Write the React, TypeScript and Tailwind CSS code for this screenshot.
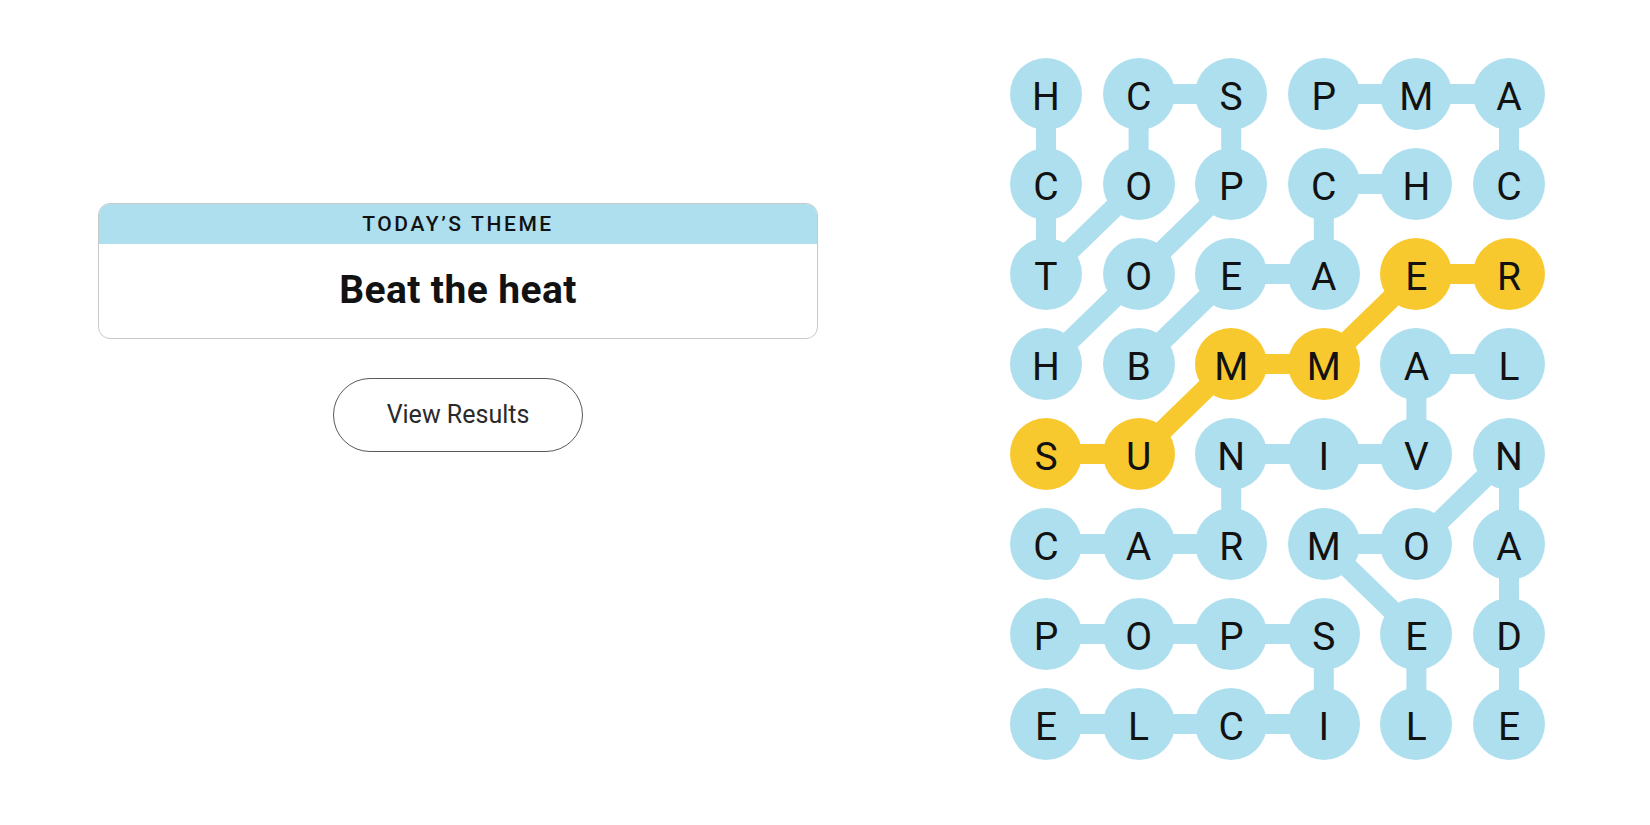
import React from 'react'

const ROWS = ['HCSPMA', 'COPCHC', 'TOEAER', 'HBMMAL', 'SUNIVN', 'CARMOA', 'POPSED', 'ELCILE']

const CELL = 72
const PITCH_X = 92.6
const PITCH_Y = 90

type Pt = [number, number]

// words as paths of [row, col]
const WORDS: Pt[][] = [
  [[3, 0], [2, 1], [1, 2], [0, 2], [0, 1], [1, 1], [2, 0], [1, 0], [0, 0]],
  [[1, 5], [0, 5], [0, 4], [0, 3]],
  [[3, 1], [2, 2], [2, 3], [1, 3], [1, 4]],
  [[5, 0], [5, 1], [5, 2], [4, 2], [4, 3], [4, 4], [3, 4], [3, 5]],
  [[7, 4], [6, 4], [5, 3], [5, 4], [4, 5], [5, 5], [6, 5], [7, 5]],
  [[6, 0], [6, 1], [6, 2], [6, 3], [7, 3], [7, 2], [7, 1], [7, 0]],
]
const SPANGRAM: Pt[] = [[4, 0], [4, 1], [3, 2], [3, 3], [2, 4], [2, 5]]

const BLUE = '#aedfee'
const YELLOW = '#f8c92e'

const isSpan = (r: number, c: number) => SPANGRAM.some(([a, b]) => a === r && b === c)

function pathD(pts: Pt[]) {
  return pts
    .map(([r, c], i) => `${i === 0 ? 'M' : 'L'}${CELL / 2 + c * PITCH_X} ${CELL / 2 + r * PITCH_Y}`)
    .join(' ')
}

function Board() {
  const w = CELL + 5 * PITCH_X
  const h = CELL + 7 * PITCH_Y
  return (
    <div className="relative" style={{ width: w, height: h }}>
      {/* connectors */}
      <svg className="absolute inset-0" width={w} height={h}>
        {WORDS.map((p, i) => (
          <path key={i} d={pathD(p)} stroke={BLUE} strokeWidth="20" fill="none" strokeLinejoin="round" />
        ))}
        <path d={pathD(SPANGRAM)} stroke={YELLOW} strokeWidth="20" fill="none" strokeLinejoin="round" />
      </svg>

      <div className="relative grid grid-cols-[repeat(6,72px)] gap-x-[20.6px] gap-y-[18px]">
        {ROWS.flatMap((row, r) =>
          row.split('').map((ch, c) => (
            <div
              key={`${r}-${c}`}
              className={`w-[72px] h-[72px] rounded-full flex items-center justify-center pt-[7px] text-[39px] leading-none text-[#121212] ${
                isSpan(r, c) ? 'bg-[#f8c92e]' : 'bg-[#aedfee]'
              }`}
              style={{ fontFamily: 'Roboto, "Liberation Sans", sans-serif' }}
            >
              {ch}
            </div>
          ))
        )}
      </div>
    </div>
  )
}

export default function App() {
  return (
    <div className="w-[1650px] h-[825px] bg-white flex items-start" style={{ fontFamily: 'Roboto, "Liberation Sans", sans-serif' }}>
      {/* Theme panel */}
      <div className="ml-[98px] mt-[203px] w-[720px] flex flex-col items-center">
        <div className="w-full rounded-[12px] border border-[#c9c9c9] overflow-hidden">
          <div className="h-[40px] bg-[#aedfee] flex items-center justify-center text-[21px] font-medium tracking-[2.6px] text-[#121212] pt-[1px]">
            TODAY’S THEME
          </div>
          <div className="h-[94px] flex items-center justify-center text-[39px] font-bold tracking-[0.4px] text-[#121212] pb-[2px]">
            Beat the heat
          </div>
        </div>

        <button className="mt-[39px] w-[250px] h-[74px] rounded-full border border-[#5a5a5a] bg-white text-[25px] text-[#2a2a2a]">
          View Results
        </button>
      </div>

      {/* Board */}
      <div className="ml-[192px] mt-[58px]">
        <Board />
      </div>
    </div>
  )
}
